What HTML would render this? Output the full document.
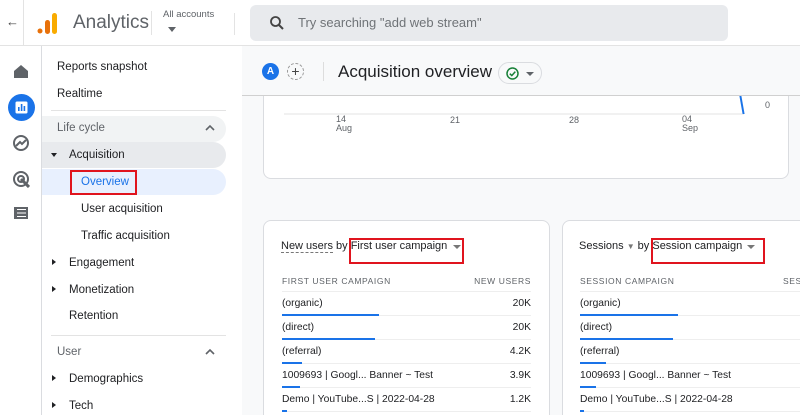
<!DOCTYPE html>
<html style="width:800px;height:415px;overflow:hidden"><head><style>
*{box-sizing:border-box;margin:0;padding:0}
body{width:800px;height:415px;overflow:hidden;font-family:"Liberation Sans",Arial,sans-serif;background:#f8f9fa;position:relative;color:#202124}
.a{position:absolute}
.top{left:0;top:0;width:800px;height:46px;background:#fff;border-bottom:1px solid #e3e3e3}
.rail{left:0;top:46px;width:42px;height:369px;background:#fff;border-right:1px solid #dadce0}
.nav{left:42px;top:46px;width:200px;height:369px;background:#fff}
.ni{position:absolute;font-size:11.5px;color:#202124}
.tri{position:absolute;width:0;height:0}
.card{background:#fff;border:1px solid #dadce0;border-radius:8px}
.row{position:absolute;left:18px;right:18px;height:24px;border-bottom:1px solid #eee;font-size:10.3px}
.row span{position:absolute;top:6px}
.bar{position:absolute;left:0;bottom:-1px;height:2px;background:#1a73e8}
</style></head><body>
<div class="a top">
  <div class="a" style="left:6px;top:14px;font-size:13px;color:#444">←</div>
  <div class="a" style="left:23px;top:0;width:1px;height:46px;background:#e3e3e3"></div>
  <svg class="a" style="left:37px;top:12px" width="22" height="22"><circle cx="3" cy="19" r="2.5" fill="#e8710a"/><rect x="8" y="8" width="5" height="14" rx="2.5" fill="#e8710a"/><rect x="15" y="1" width="5" height="21" rx="2.5" fill="#f9ab00"/></svg>
  <div class="a" style="left:73px;top:12px;font-size:19px;color:#5f6368">Analytics</div>
  <div class="a" style="left:151px;top:11px;width:1px;height:24px;background:#e3e3e3"></div>
  <div class="a" style="left:163px;top:9px;font-size:9.5px;color:#5f6368">All accounts</div>
  <div class="tri" style="left:168px;top:27px;border-left:4px solid transparent;border-right:4px solid transparent;border-top:5px solid #5f6368"></div>
  <div class="a" style="left:234px;top:13px;width:1px;height:22px;background:#e3e3e3"></div>
  <div class="a" style="left:250px;top:5px;width:478px;height:36px;background:#e8eaed;border-radius:6px"></div>
  <svg class="a" style="left:269px;top:15px" width="16" height="16"><circle cx="6.5" cy="6.5" r="4.5" fill="none" stroke="#444" stroke-width="1.8"/><line x1="10" y1="10" x2="14" y2="14" stroke="#444" stroke-width="2"/></svg>
  <div class="a" style="left:298px;top:15px;font-size:13px;color:#6f7377">Try searching "add web stream"</div>
</div>
<div class="a rail">
  <svg class="a" style="left:13px;top:18px" width="16" height="15"><path d="M1 7 L8 1 L15 7 V14 H1Z" fill="#5f6368"/></svg>
  <div class="a" style="left:8px;top:48px;width:27px;height:27px;border-radius:50%;background:#1a73e8"></div>
  <svg class="a" style="left:15px;top:55px" width="13" height="13"><rect x="0.5" y="0.5" width="12" height="12" rx="1.5" fill="#fff"/><rect x="3" y="6" width="1.6" height="4" fill="#1a73e8"/><rect x="5.8" y="3" width="1.6" height="7" fill="#1a73e8"/><rect x="8.6" y="5" width="1.6" height="5" fill="#1a73e8"/></svg>
  <svg class="a" style="left:12px;top:88px" width="18" height="18"><circle cx="9" cy="9" r="7" fill="none" stroke="#5f6368" stroke-width="2"/><path d="M4 12 L8 8 L10 10 L14 6" stroke="#5f6368" stroke-width="2" fill="none"/></svg>
  <svg class="a" style="left:12px;top:124px" width="18" height="18"><circle cx="9" cy="9" r="7" fill="none" stroke="#5f6368" stroke-width="2"/><circle cx="9" cy="9" r="3" fill="none" stroke="#5f6368" stroke-width="2"/><path d="M9 9 L17 17" stroke="#5f6368" stroke-width="3"/></svg>
  <svg class="a" style="left:14px;top:161px" width="14" height="12"><rect width="14" height="12" fill="#5f6368"/><path d="M3 2.5H12M3 6H12M3 9.5H12" stroke="#fff" stroke-width="1"/></svg>
</div>
<div class="a nav">
  <div class="ni" style="left:15px;top:15px">Reports snapshot</div>
  <div class="ni" style="left:15px;top:42px">Realtime</div>
  <div class="a" style="left:9px;top:64px;width:175px;height:1px;background:#e3e3e3"></div>
  <div class="a" style="left:0;top:70px;width:184px;height:26px;background:#f1f3f4;border-radius:0 13px 13px 0"></div>
  <div class="ni" style="left:15px;top:76px;color:#5f6368">Life cycle</div>
  <svg class="a" style="left:163px;top:78px" width="10" height="7"><path d="M1 6 L5 2 L9 6" stroke="#5f6368" stroke-width="1.6" fill="none"/></svg>
  <div class="a" style="left:0;top:96px;width:184px;height:26px;background:#e8eaed;border-radius:0 13px 13px 0"></div>
  <div class="tri" style="left:9px;top:107px;border-left:3px solid transparent;border-right:3px solid transparent;border-top:4px solid #202124"></div>
  <div class="ni" style="left:27px;top:103px">Acquisition</div>
  <div class="a" style="left:0;top:123px;width:184px;height:26px;background:#e8f0fe;border-radius:0 13px 13px 0"></div>
  <div class="a" style="left:28px;top:124px;width:67px;height:25px;border:2px solid #e0141e"></div>
  <div class="ni" style="left:39px;top:130px;color:#1a73e8">Overview</div>
  <div class="ni" style="left:39px;top:157px">User acquisition</div>
  <div class="ni" style="left:39px;top:184px">Traffic acquisition</div>
  <div class="tri" style="left:10px;top:213px;border-top:3px solid transparent;border-bottom:3px solid transparent;border-left:4px solid #202124"></div>
  <div class="ni" style="left:27px;top:211px">Engagement</div>
  <div class="tri" style="left:10px;top:240px;border-top:3px solid transparent;border-bottom:3px solid transparent;border-left:4px solid #202124"></div>
  <div class="ni" style="left:27px;top:238px">Monetization</div>
  <div class="ni" style="left:27px;top:264px">Retention</div>
  <div class="a" style="left:9px;top:289px;width:175px;height:1px;background:#e3e3e3"></div>
  <div class="ni" style="left:15px;top:300px;color:#5f6368">User</div>
  <svg class="a" style="left:163px;top:302px" width="10" height="7"><path d="M1 6 L5 2 L9 6" stroke="#5f6368" stroke-width="1.6" fill="none"/></svg>
  <div class="tri" style="left:10px;top:329px;border-top:3px solid transparent;border-bottom:3px solid transparent;border-left:4px solid #202124"></div>
  <div class="ni" style="left:27px;top:327px">Demographics</div>
  <div class="tri" style="left:10px;top:356px;border-top:3px solid transparent;border-bottom:3px solid transparent;border-left:4px solid #202124"></div>
  <div class="ni" style="left:27px;top:354px">Tech</div>
</div>
<!-- header -->
<div class="a" style="left:242px;top:46px;width:558px;height:50px;background:#f8f9fa;border-bottom:1px solid #d0d0d0;z-index:2">
  <div class="a" style="left:20px;top:17px;width:17px;height:17px;border-radius:50%;background:#1a73e8;color:#fff;font-size:10px;font-weight:bold;text-align:center;line-height:17px">A</div>
  <div class="a" style="left:45px;top:17px;width:17px;height:17px;border-radius:50%;border:1px dashed #999;color:#444;font-size:14px;text-align:center;line-height:14px">+</div>
  <div class="a" style="left:81px;top:16px;width:1px;height:19px;background:#ddd"></div>
  <div class="a" style="left:96px;top:16px;font-size:17px;color:#202124">Acquisition overview</div>
  <div class="a" style="left:256px;top:16px;width:44px;height:22px;border:1px solid #dadce0;border-radius:11px"></div>
  <svg class="a" style="left:264px;top:21px" width="13" height="13"><circle cx="6.5" cy="6.5" r="5.5" fill="none" stroke="#188038" stroke-width="1.5"/><path d="M3.8 6.7 L5.8 8.6 L9.3 4.6" stroke="#188038" stroke-width="1.5" fill="none"/></svg>
  <div class="tri" style="left:284px;top:26px;border-left:4px solid transparent;border-right:4px solid transparent;border-top:4px solid #5f6368"></div>
</div>
<!-- chart card -->
<div class="a card" style="left:263px;top:80px;width:526px;height:99px;border-radius:0 0 8px 8px"></div>
<div class="a" style="left:284px;top:113px;width:460px;height:2px;background:#f1f1f1"></div>
<div class="a" style="left:741px;top:96px;width:2px;height:18px;background:#1a73e8;transform:skewX(10deg)"></div>
<div class="a" style="left:765px;top:100px;font-size:9px;color:#5f6368">0</div>
<div class="a" style="left:336px;top:115px;font-size:9px;color:#5f6368;line-height:9px">14<br>Aug</div>
<div class="a" style="left:450px;top:115px;font-size:9px;color:#5f6368">21</div>
<div class="a" style="left:569px;top:115px;font-size:9px;color:#5f6368">28</div>
<div class="a" style="left:682px;top:115px;font-size:9px;color:#5f6368;line-height:9px">04<br>Sep</div>
<!-- left table card -->
<div class="a card" style="left:263px;top:220px;width:287px;height:210px">
  <div class="a" style="left:17px;top:19px;font-size:11px;color:#202124"><span style="border-bottom:1px dashed #777">New users</span> by First user campaign</div>
  <div class="tri" style="left:189px;top:24px;border-left:4px solid transparent;border-right:4px solid transparent;border-top:4px solid #777"></div>
  <div class="a" style="left:85px;top:17px;width:115px;height:26px;border:2px solid #e0141e"></div>
  <div class="a" style="left:18px;top:55px;font-size:8.5px;letter-spacing:.6px;color:#5f6368">FIRST USER CAMPAIGN</div>
  <div class="a" style="right:18px;top:55px;font-size:8.5px;letter-spacing:.6px;color:#5f6368">NEW USERS</div>
  <div class="a" style="left:18px;right:18px;top:70px;height:1px;background:#eee"></div>
  <div class="row" style="top:71px"><span style="left:0">(organic)</span><span style="right:0">20K</span><div class="bar" style="width:97px"></div></div>
  <div class="row" style="top:95px"><span style="left:0">(direct)</span><span style="right:0">20K</span><div class="bar" style="width:93px"></div></div>
  <div class="row" style="top:119px"><span style="left:0">(referral)</span><span style="right:0">4.2K</span><div class="bar" style="width:20px"></div></div>
  <div class="row" style="top:143px"><span style="left:0">1009693 | Googl... Banner ~ Test</span><span style="right:0">3.9K</span><div class="bar" style="width:18px"></div></div>
  <div class="row" style="top:167px"><span style="left:0">Demo | YouTube...S | 2022-04-28</span><span style="right:0">1.2K</span><div class="bar" style="width:5px"></div></div>
</div>
<!-- right table card -->
<div class="a card" style="left:562px;top:220px;width:260px;height:210px">
  <div class="a" style="left:16px;top:19px;font-size:11px;color:#202124">Sessions <span style="color:#777;font-size:8px">▼</span> by Session campaign</div>
  <div class="tri" style="left:184px;top:24px;border-left:4px solid transparent;border-right:4px solid transparent;border-top:4px solid #777"></div>
  <div class="a" style="left:88px;top:17px;width:114px;height:26px;border:2px solid #e0141e"></div>
  <div class="a" style="left:17px;top:55px;font-size:8.5px;letter-spacing:.6px;color:#5f6368">SESSION CAMPAIGN</div>
  <div class="a" style="left:220px;top:55px;font-size:8.5px;letter-spacing:.6px;color:#5f6368">SESS</div>
  <div class="a" style="left:17px;right:0;top:70px;height:1px;background:#eee"></div>
  <div class="row" style="top:71px;left:17px;right:0"><span style="left:0">(organic)</span><div class="bar" style="width:98px"></div></div>
  <div class="row" style="top:95px;left:17px;right:0"><span style="left:0">(direct)</span><div class="bar" style="width:93px"></div></div>
  <div class="row" style="top:119px;left:17px;right:0"><span style="left:0">(referral)</span><div class="bar" style="width:26px"></div></div>
  <div class="row" style="top:143px;left:17px;right:0"><span style="left:0">1009693 | Googl... Banner ~ Test</span><div class="bar" style="width:16px"></div></div>
  <div class="row" style="top:167px;left:17px;right:0"><span style="left:0">Demo | YouTube...S | 2022-04-28</span><div class="bar" style="width:4px"></div></div>
</div>
</body></html>
